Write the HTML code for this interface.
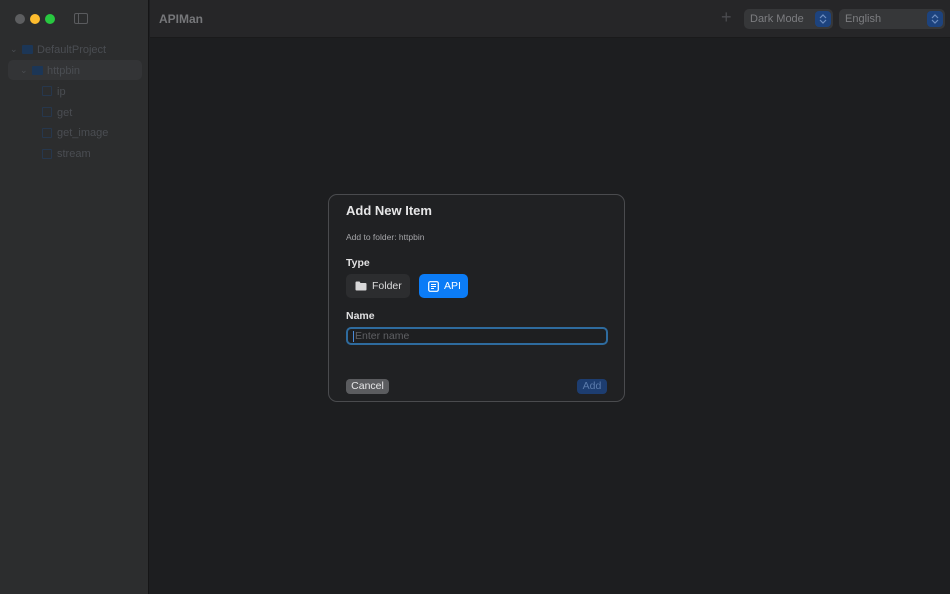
<!DOCTYPE html>
<html><head><meta charset="utf-8"><style>
*{box-sizing:border-box;margin:0;padding:0}
body{width:950px;height:594px;overflow:hidden;background:#1d1e20;font-family:"Liberation Sans",sans-serif;position:relative}
.side{position:absolute;left:0;top:0;width:149px;height:594px;background:#2c2d2e;border-right:1px solid #151516}
.dot{position:absolute;top:14px;width:10px;height:10px;border-radius:50%}
.hdr{position:absolute;left:150px;top:0;right:0;height:38px;background:#262628;border-bottom:1px solid #1a1a1b}
.t{position:absolute;font-size:11px;color:#4a4d52}
.fi{position:absolute;width:10px;height:10px;border:1px solid #26374d;border-radius:1px}
.sel{position:absolute;height:20px;border-radius:5px;background:#363739;font-size:11px;color:#7c7d80;padding:4px 6px}
.sel b{position:absolute;right:2px;top:2px;width:16px;height:16px;border-radius:4px;background:#1d437e}
.sel b svg{position:absolute;left:4px;top:3px}
.dlg{position:absolute;left:328px;top:194px;width:297px;height:208px;background:#202123;border:1px solid #4a4b4e;border-radius:9px}
.dlg div{position:absolute}
</style></head><body>
<div class="side">
<div class="dot" style="left:15px;background:#5d5e60"></div>
<div class="dot" style="left:30px;background:#fdbc2e"></div>
<div class="dot" style="left:45px;background:#28c840"></div>
<div style="position:absolute;left:74px;top:13px;width:14px;height:11px;border:1.5px solid #5a5b5e;border-radius:2px"><div style="position:absolute;left:3px;top:0;bottom:0;border-left:1.5px solid #5a5b5e"></div></div>
<div style="position:absolute;left:8px;top:60px;width:134px;height:20px;background:#333436;border-radius:5px"></div>
<div class="t" style="left:10px;top:44px;font-size:9px">⌄</div>
<div style="position:absolute;left:22px;top:45px;width:11px;height:9px;background:#1c3656;border-radius:1px"></div>
<div class="t" style="left:37px;top:44px">DefaultProject</div>
<div class="t" style="left:20px;top:65px;font-size:9px">⌄</div>
<div style="position:absolute;left:32px;top:66px;width:11px;height:9px;background:#1c3656;border-radius:1px"></div>
<div class="t" style="left:47px;top:65px">httpbin</div>
<div class="fi" style="left:42px;top:86px"></div><div class="t" style="left:57px;top:86px">ip</div>
<div class="fi" style="left:42px;top:107px"></div><div class="t" style="left:57px;top:107px">get</div>
<div class="fi" style="left:42px;top:128px"></div><div class="t" style="left:57px;top:127px">get_image</div>
<div class="fi" style="left:42px;top:149px"></div><div class="t" style="left:57px;top:148px">stream</div>
</div>
<div class="hdr">
<div style="position:absolute;left:9px;top:12px;font-size:12px;font-weight:bold;color:#76777a">APIMan</div>
<div style="position:absolute;left:571px;top:7px;font-size:18px;color:#4a4b4f">+</div>
<div class="sel" style="left:594px;top:9px;width:89px">Dark Mode<b><svg width="8" height="10"><path d="M1 4 4 1 7 4M1 6 4 9 7 6" fill="none" stroke="#6f8fc0" stroke-width="1.2"/></svg></b></div>
<div class="sel" style="left:689px;top:9px;width:106px">English<b><svg width="8" height="10"><path d="M1 4 4 1 7 4M1 6 4 9 7 6" fill="none" stroke="#6f8fc0" stroke-width="1.2"/></svg></b></div>
</div>
<div class="dlg">
<div style="left:17px;top:8px;font-size:13px;font-weight:bold;color:#e6e6e7">Add New Item</div>
<div style="left:17px;top:37px;font-size:8.5px;color:#a4a5a8">Add to folder: httpbin</div>
<div style="left:17px;top:62px;font-size:10.5px;font-weight:bold;color:#e0e0e1">Type</div>
<div style="left:17px;top:79px;width:64px;height:24px;background:#2c2d2f;border-radius:5px;color:#dcdcdd;font-size:10.5px;padding:6px 0 0 26px">Folder<svg style="position:absolute;left:9px;top:7px" width="12" height="10"><path d="M0.5 1.5Q0.5 0.5 1.5 0.5H4.5L5.5 2H10.5Q11.5 2 11.5 3V8.5Q11.5 9.5 10.5 9.5H1.5Q0.5 9.5 0.5 8.5Z" fill="#d8d8d9"/></svg></div>
<div style="left:90px;top:79px;width:49px;height:24px;background:#0b7cf7;border-radius:5px;color:#fff;font-size:10.5px;padding:6px 0 0 25px">API<svg style="position:absolute;left:9px;top:7px" width="11" height="11"><rect x="0.7" y="0.7" width="9.6" height="9.6" rx="1.5" fill="none" stroke="#fff" stroke-width="1.2"/><path d="M3 3.5H8M3 5.5H8M3 7.5H6" stroke="#fff" stroke-width="1"/></svg></div>
<div style="left:17px;top:115px;font-size:10.5px;font-weight:bold;color:#e0e0e1">Name</div>
<div style="left:17px;top:132px;width:262px;height:18px;border:2px solid #2e6b9e;border-radius:5px;background:#1e1f21;font-size:10.5px;color:#5f6064;padding:1px 0 0 7px"><span style="position:absolute;left:5px;top:2px;width:1px;height:11px;background:#4a8ad8"></span>Enter name</div>
<div style="left:17px;top:184px;width:43px;height:15px;background:#5b5c5f;border-radius:4px;color:#e6e6e7;font-size:10.5px;text-align:center;line-height:15px">Cancel</div>
<div style="left:248px;top:184px;width:30px;height:15px;background:#1d3d70;border-radius:4px;color:#5b7bab;font-size:10.5px;text-align:center;line-height:15px">Add</div>
</div>
</body></html>
